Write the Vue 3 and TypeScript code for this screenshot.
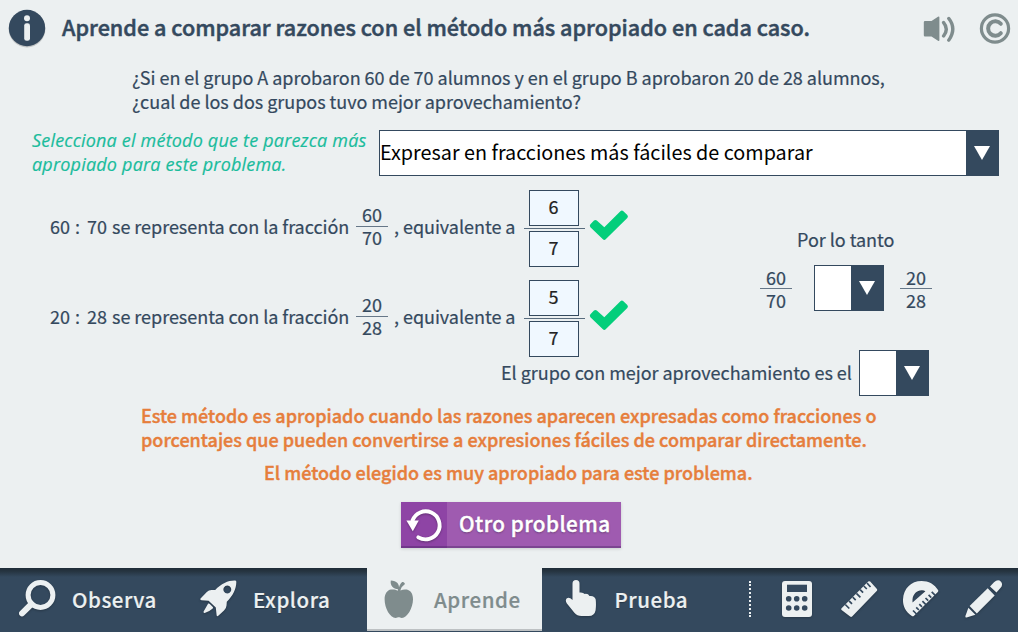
<script setup lang="ts">
interface Ratio {
  a: number
  b: number
  num: number
  den: number
}

const ratios: Ratio[] = [
  { a: 60, b: 70, num: 6, den: 7 },
  { a: 20, b: 28, num: 5, den: 7 },
]
</script>

<template>
  <div class="app">
    <header class="top">
      <svg class="info" width="40" height="40" viewBox="0 0 40 40">
        <circle class="shade" cx="20" cy="21" r="18.4" />
        <circle cx="20" cy="20" r="18.2" fill="#34495e" />
        <circle cx="20" cy="10.3" r="3" fill="#ecf0f1" />
        <rect x="17.2" y="15.2" width="5.8" height="17.6" rx="2.4" fill="#ecf0f1" />
      </svg>
      <h1>Aprende a comparar razones con el método más apropiado en cada caso.</h1>
      <svg class="sound" width="34" height="34" viewBox="0 0 34 34" fill="#7f8c8d">
        <path d="M3 10h6.500l6.500-4.300q1.400-.8 1.400.8v22.500q0 1.600-1.400.8L9.500 25.500H3q-1.200 0-1.200-1.200V11.200Q1.800 10 3 10z" />
        <path d="M21.600 11.600q5.400 6.400 0 13.400M26.800 7.500q8 10 0 21.600" fill="none" stroke="#7f8c8d" stroke-width="3.400" stroke-linecap="round" />
      </svg>
      <svg class="copy" width="34" height="34" viewBox="0 0 34 34" fill="none" stroke="#7f8c8d">
        <circle cx="17" cy="17.500" r="13.600" stroke-width="3.200" />
        <path d="M22.800 12.800a7.200 7.200 0 1 0 0 9.400" stroke-width="4" stroke-linecap="round" />
      </svg>
    </header>

    <p class="question">
      ¿Si en el grupo A aprobaron 60 de 70 alumnos y en el grupo B aprobaron 20 de 28 alumnos,<br />
      ¿cual de los dos grupos tuvo mejor aprovechamiento?
    </p>

    <section class="method">
      <p class="hint">Selecciona el método que te parezca más<br />apropiado para este problema.</p>
      <div class="select wide">
        <span class="value">Expresar en fracciones más fáciles de comparar</span>
        <span class="arrow"><svg width="16" height="14" viewBox="0 0 16 14"><path d="M0 0h16L8 14z" fill="#fff" /></svg></span>
      </div>
    </section>

    <section class="work">
      <div class="ratios">
        <div v-for="r in ratios" :key="r.a" class="ratio">
          <span class="first">{{ r.a }}</span>
          <span class="colon">:</span>
          <span class="second">{{ r.b }}</span>
          <span class="phrase">se representa con la fracción</span>
          <span class="fraction"><span>{{ r.a }}</span><i></i><span>{{ r.b }}</span></span>
          <span class="equal">, equivalente a</span>
          <span class="answer">
            <span class="box">{{ r.num }}</span>
            <i></i>
            <span class="box">{{ r.den }}</span>
          </span>
          <svg class="check" width="40" height="32" viewBox="0 0 40 32">
            <path d="M1.400 15.200L5 11.600q1.400-1 2.800 0l7.500 6.700L31.400 2.200q1.500-1.300 3 0l3.900 3.700q1.300 1.500 0 3L16.700 30.300q-1.400 1.200-2.800 0L1.400 18.200q-1.200-1.500 0-3z" fill="#03ce7b" />
          </svg>
        </div>
      </div>
      <div class="compare">
        <p>Por lo tanto</p>
        <div class="operands">
          <span class="fraction"><span>60</span><i></i><span>70</span></span>
          <div class="select small">
            <span class="value"></span>
            <span class="arrow"><svg width="16" height="14" viewBox="0 0 16 14"><path d="M0 0h16L8 14z" fill="#fff" /></svg></span>
          </div>
          <span class="fraction"><span>20</span><i></i><span>28</span></span>
        </div>
      </div>
    </section>

    <section class="winner">
      <span>El grupo con mejor aprovechamiento es el</span>
      <div class="select small">
        <span class="value"></span>
        <span class="arrow"><svg width="16" height="14" viewBox="0 0 16 14"><path d="M0 0h16L8 14z" fill="#fff" /></svg></span>
      </div>
    </section>

    <p class="note">
      Este método es apropiado cuando las razones aparecen expresadas como fracciones o<br />
      porcentajes que pueden convertirse a expresiones fáciles de comparar directamente.
    </p>
    <p class="verdict">El método elegido es muy apropiado para este problema.</p>

    <button class="again" type="button">
      <span class="again-icon">
        <svg width="46" height="46" viewBox="0 0 46 46">
          <path d="M11.500 18.500A14 14 0 1 1 17.300 35.300" fill="none" stroke="#fff" stroke-width="3.900" stroke-linecap="round" />
          <path d="M5.400 18.400h12.400L11.800 29.200z" fill="#fff" />
        </svg>
      </span>
      <span class="again-label">Otro problema</span>
    </button>

    <nav class="bar">
      <a class="tab observa">
        <svg width="40" height="40" viewBox="0 0 40 40" fill="none" stroke="#ecf0f1">
          <circle cx="22.500" cy="16" r="12.400" stroke-width="5" />
          <path d="M13.500 25L4 34.400" stroke-width="6" stroke-linecap="round" />
        </svg>
        <span>Observa</span>
      </a>
      <a class="tab explora">
        <svg width="40" height="40" viewBox="0 0 40 40" fill="#ecf0f1">
          <path fill-rule="evenodd" d="M36.500 1.500Q38.500 1.300 38.300 3.200C38.200 10 35 16.500 28.800 22.700L28.500 26.500Q28.300 29.500 26 31.500L20.300 36.800Q18.800 38 18.600 36L17.800 28.600L10.600 21.800L3.500 21.200Q1.400 20.800 2.800 19.200L8.800 13Q11 10.800 14 11L17.200 11C23 4.800 30 1.500 36.500 1.500zM29.300 6.600a3.900 3.900 0 1 0 .01 0z" />
          <path d="M10.200 24.600q1-.2 1.600.5l3 3q.700.8-.1 1.500-3.500 3.300-8 4.300-1.600.2-1.100-1.400z" />
        </svg>
        <span>Explora</span>
      </a>
      <a class="tab aprende">
        <svg width="34" height="40" viewBox="0 0 34 40" fill="#7f8c8d">
          <path d="M8.800.600C15 .600 17 4.500 17 7.300C18 4.400 19.200 3 20.200 2.100q.8-.4 1.500.2l1 .9q.4.700-.2 1.300C20 6.400 18.800 8.200 18.400 10.600C20.600 9.500 22.700 9.200 24.700 9.600C28.800 10.400 31 14.300 31 19.200C31 28 25 38 19.800 37.900C18.300 37.900 17.800 37.200 16.800 37.200S15 37.900 13.600 37.900C8 37.900 2.600 28 2.600 19.200C2.600 14 5.200 10.200 9 9.600C11.600 9.200 14 9.800 15.800 10.800L16 9.300C11.500 9 7.900 6 8.800.600z" />
        </svg>
        <span>Aprende</span>
      </a>
      <a class="tab prueba">
        <svg width="34" height="40" viewBox="0 0 34 40" fill="#ecf0f1">
          <path d="M8.500 4.700Q8.500 1 12 1T15.500 4.700V13.500Q19 13 20.700 15Q24 14.300 25.500 17Q30.500 16.300 31.700 20.500Q32.300 26 31.600 31.200Q30.500 37 24.700 37H17.500Q13 37 10.600 34L2.700 24.200Q1 21.400 2.600 19.500Q5 17.500 8.500 21z" />
        </svg>
        <span>Prueba</span>
      </a>
      <span class="divider"></span>
      <div class="tools">
        <svg width="40" height="40" viewBox="0 0 40 40">
          <rect x="5" y="2" width="30" height="36" rx="3" fill="#ecf0f1" />
          <rect x="10" y="5.700" width="20" height="7.300" fill="#34495e" />
          <g fill="#34495e">
            <circle cx="11.700" cy="19.700" r="2.800" /><circle cx="19.700" cy="19.700" r="2.800" /><circle cx="27.700" cy="19.700" r="2.800" />
            <circle cx="11.700" cy="29" r="2.800" /><circle cx="19.700" cy="29" r="2.800" /><circle cx="27.700" cy="29" r="2.800" />
          </g>
        </svg>
        <svg width="40" height="40" viewBox="0 0 40 40">
          <path d="M2.600 29.200L29.200 2.600q1-.8 2 0l6.500 7.200q1 1.200 0 2.300L13.100 37.500q-1 .9-2 0l-8.500-6.500q-.9-.9 0-1.800z" fill="#ecf0f1" />
          <path d="M6.300 25.500l4 4M10 21.800l3 3M13.700 18.100l3 3M17.400 14.400l4 4M21.100 10.700l3 3M24.800 7l3 3M28 4l3.500 4" stroke="#34495e" stroke-width="1.700" />
        </svg>
        <svg width="40" height="40" viewBox="0 0 40 40">
          <path fill-rule="evenodd" d="M11.200 37.200C4.500 33 1.800 27 2 20.500C2.500 9.500 10 2 20.600 2C27.600 2 33.600 5.200 37.200 11.300q.3 1-.4 1.600L12.800 37q-.8.600-1.600.2zM11.500 23.600V20.600C12 15 16 11.300 20.700 11.300Q23 11.200 24.400 12.300z" fill="#ecf0f1" />
          <path d="M12 31.500l4.500 4.500M15.200 28.300l2.700 2.700M18.300 25.200l2.700 2.700M21.400 22.100l3.500 3.500M24.500 19l2.700 2.700M27.600 15.900l2.700 2.700M30.700 12.800l3.500 3.500" stroke="#34495e" stroke-width="1.700" />
        </svg>
        <svg width="40" height="40" viewBox="0 0 40 40" fill="#ecf0f1">
          <path d="M27 7.500L31 3.200q4-3.500 7-.5q2.500 3-.8 6.600L33.500 13.500z" />
          <path d="M24.700 9.300l7 7.300L13.800 34.500L6.600 27z" />
          <path d="M5.400 28.700l7 7L3.600 38.500Q2 38.700 2.400 37z" />
        </svg>
      </div>
    </nav>
  </div>
</template>

<style scoped>
.app {
  width: 1018px;
  height: 632px;
  display: flex;
  flex-direction: column;
  overflow: hidden;
  background: #ecf0f1;
  color: #34495e;
  font: 400 18px/24px "Noto Sans CJK SC", "Noto Sans", sans-serif;
  letter-spacing: -0.03px;
  white-space: nowrap;
  -webkit-text-stroke: 0.2px;
}
p, h1 { margin: 0; }
svg { display: block; flex: none; }

.top { display: flex; align-items: center; height: 56px; padding-left: 7px; }
.shade { fill: rgba(0, 0, 0, 0.18); }
.top h1 {
  width: 860px;
  margin: -2px 0 0 15px;
  font-size: 21.6px;
  font-weight: 500;
  letter-spacing: 0;
  -webkit-text-stroke: 0.5px;
}
.sound { margin-right: 22px; }

.question { padding: 9px 0 0 132px; }

.method { display: flex; height: 46px; margin-top: 17px; padding-left: 32px; }
.hint {
  width: 347px;
  margin-top: -2px;
  color: #1abc9c;
  font-family: "Open Sans", sans-serif;
  font-style: italic;
  letter-spacing: 0.19px;
}

.select { display: flex; height: 46px; box-sizing: border-box; border: 1px solid #34495e; background: #fff; }
.select .value { flex: 1; }
.select .arrow { display: flex; justify-content: center; width: 32px; background: #34495e; }
.select .arrow svg { margin-top: 15px; }
.wide { width: 620px; color: #000; font-size: 19.8px; line-height: 42px; letter-spacing: 0; -webkit-text-stroke: 0; }
.small { width: 70px; }

.work { display: flex; height: 167px; margin-top: 14px; padding-left: 50px; }
.ratios { display: flex; flex-direction: column; gap: 13px; width: 710px; }
.ratio { display: flex; align-items: center; height: 77px; }
.ratio > span { margin-top: -5px; }
.first { width: 25px; }
.colon { width: 12px; }
.second { width: 25px; }
.phrase { width: 244px; }
.fraction { display: flex; flex-direction: column; align-items: center; width: 32px; line-height: 22px; }
.fraction i { width: 32px; height: 1px; background: #667788; }
.ratio > .fraction { margin-top: -4px; }
.ratio > .fraction > span { margin: -1px 0 1px; }
.equal { width: 130px; margin-left: 6px; }
.ratio > .answer { display: flex; flex-direction: column; align-items: center; gap: 2px; width: 61px; margin-top: 0; }
.answer i { width: 61px; height: 1px; background: #586b7d; }
.box {
  box-sizing: border-box;
  width: 50px;
  height: 36px;
  margin-right: 2px;
  border: 1px solid #34495e;
  background: #f0f8ff;
  color: #222;
  text-align: center;
  line-height: 30px;
}
.check { margin: -8px 0 0 4px; }

.compare { width: 172px; padding-top: 37px; }
.compare p { padding-left: 37px; }
.operands { display: flex; align-items: center; margin-top: 14px; }
.operands .select { margin: 0 16px 0 22px; }

.winner { display: flex; justify-content: flex-end; margin-top: -7px; padding-right: 89px; line-height: 44px; }
.winner > span { width: 358px; }

.note, .verdict { color: #e67e3c; font-weight: 500; letter-spacing: 0; -webkit-text-stroke: 0.4px; }
.note { margin-top: 7px; padding-left: 141px; }
.verdict { margin-top: 9px; padding-left: 264px; }

.again {
  display: flex;
  flex: none;
  width: 220px;
  height: 46px;
  margin: 18px 0 0 401px;
  padding: 0;
  border: 0;
  background: #9f5bb0;
  box-shadow: inset 0 -2px rgba(60, 30, 90, 0.35), 0 1px 3px rgba(0, 0, 0, 0.15);
  color: #fff;
  font: 500 20.7px/43px "Noto Sans CJK SC", sans-serif;
  letter-spacing: 0.45px;
  text-shadow: 0 1px 2px rgba(0, 0, 0, 0.35);
  -webkit-text-stroke: 0.4px;
}
.again-icon { width: 46px; height: 46px; background: #8e44a5; box-shadow: inset 0 -2px rgba(60, 30, 90, 0.35); }
.again-icon svg { filter: drop-shadow(0 1px 1px rgba(0, 0, 0, 0.3)); }
.again-label { margin-left: 12px; }

.bar {
  display: flex;
  height: 64px;
  margin-top: auto;
  background: linear-gradient(#1f2d39 0, #25333f 3px, #34495e 9px);
  color: #ecf0f1;
  font-size: 20.5px;
  font-weight: 500;
  letter-spacing: 0.55px;
}
.bar svg { filter: drop-shadow(0 1px 1px rgba(0, 0, 0, 0.25)); }
.tab { display: flex; align-items: center; box-sizing: border-box; height: 64px; padding-bottom: 2px; }
.tab span { line-height: 30px; text-shadow: 0 1px 1px rgba(0, 0, 0, 0.3); }
.observa { width: 182px; padding-left: 17.5px; }
.observa span { margin-left: 14.5px; }
.explora { width: 185px; padding-left: 16px; }
.explora span { margin-left: 15px; }
.aprende { width: 175px; height: 63px; padding: 0 0 0 15px; border-bottom: 2px solid #bdc1c3; background: #ecf0f1; color: #7f8c8d; }
.aprende span { margin-left: 18px; text-shadow: none; }
.aprende svg { margin-top: 3px; filter: none; }
.prueba { width: 207px; padding-left: 21.5px; }
.prueba span { margin-left: 17px; }
.divider { height: 36px; margin-top: 13px; border-left: 2px dotted #ecf0f1; }
.tools { display: flex; gap: 22px; margin: 11px 0 0 26px; }
</style>
